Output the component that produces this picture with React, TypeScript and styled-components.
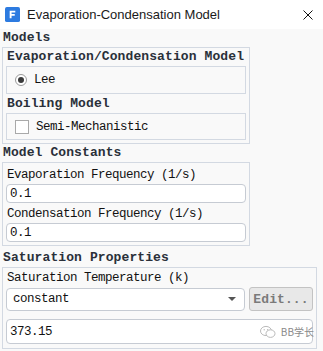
import React from "react";
import styled, { createGlobalStyle } from "styled-components";

let Global = createGlobalStyle`
  html, body { margin: 0; padding: 0; background: #f9f9f9; }
  * { box-sizing: border-box; }
`;

export default function App() {
  return (
    <Window>
      <Global />
      <TitleBar>
        <Logo viewBox="0 0 16 16">
          <rect x="0" y="0" width="16" height="16" rx="2" fill="#2d7be0" />
          <path d="M5 4h6v1.8H7v1.7h3.4v1.8H7V12H5z" fill="#fff" />
        </Logo>
        <Title>Evaporation-Condensation Model</Title>
        <Close viewBox="0 0 10 10">
          <path d="M0.5 0.5L9.5 9.5M9.5 0.5L0.5 9.5" stroke="#111" strokeWidth="1" />
        </Close>
      </TitleBar>
      <Body>
        <Heading h={18}>Models</Heading>
        <Group width={248}>
          <SubHeading h={18}>Evaporation/Condensation Model</SubHeading>
          <Inner h={28}>
            <Radio checked />
            <OptionText>Lee</OptionText>
          </Inner>
          <SubHeading h={19}>Boiling Model</SubHeading>
          <Inner h={27}>
            <Check />
            <OptionText>Semi-Mechanistic</OptionText>
          </Inner>
        </Group>

        <Heading h={18}>Model Constants</Heading>
        <Group width={248}>
          <Label h={21}>Evaporation Frequency (1/s)</Label>
          <Field>0.1</Field>
          <Label h={20}>Condensation Frequency (1/s)</Label>
          <Field>0.1</Field>
        </Group>

        <Heading h={21}>Saturation Properties</Heading>
        <Group width={315} last>
          <Label h={19}>Saturation Temperature (k)</Label>
          <SelectRow>
            <Select>
              <span>constant</span>
              <Caret />
            </Select>
            <EditButton>Edit...</EditButton>
          </SelectRow>
          <Field tall>373.15</Field>
        </Group>
      </Body>
      <Watermark>
        <svg width="16" height="14" viewBox="0 0 16 14">
          <ellipse cx="6" cy="6" rx="5.5" ry="4.6" fill="none" stroke="#bbb" strokeWidth="1" />
          <ellipse cx="10.5" cy="8.6" rx="4.5" ry="3.8" fill="#fff" stroke="#bbb" strokeWidth="1" />
          <circle cx="4.2" cy="4.8" r="0.7" fill="#bbb" />
          <circle cx="7.6" cy="4.8" r="0.7" fill="#bbb" />
        </svg>
        <span>BB学长</span>
      </Watermark>
    </Window>
  );
}

let Window = styled.div`
  position: relative;
  width: 323px;
  height: 351px;
  background: #f9f9f9;
  overflow: hidden;
`;

let TitleBar = styled.div`
  height: 29px;
  background: #ffffff;
  display: flex;
  align-items: center;
  padding: 0 10px 0 5px;
`;

let Logo = styled.svg`
  width: 15px;
  height: 15px;
  margin-right: 7px;
`;

let Title = styled.div`
  flex: 1;
  font-family: "Liberation Sans", Arial, sans-serif;
  font-size: 13px;
  color: #1a1a1a;
`;

let Close = styled.svg`
  width: 10px;
  height: 10px;
  margin-top: 1px;
`;

let Body = styled.div`
  padding: 0 0 0 2px;
  font-family: "Liberation Mono", "Noto Sans CJK SC", monospace;
  color: #111;
`;

let Heading = styled.div<{ h: number }>`
  height: ${({ h }) => h}px;
  display: flex;
  align-items: flex-end;
  padding-bottom: 2px;
  margin-left: 1px;
  font-size: 13px;
  font-weight: bold;
  letter-spacing: 0.1px;
  color: #2a3039;
`;

let Group = styled.div<{ width: number; last?: boolean }>`
  width: ${({ width }) => width}px;
  border: 1px solid #d3d9e2;
  padding: 0 3px ${({ last }) => (last ? 4 : 3)}px 3px;
  display: flex;
  flex-direction: column;
`;

let SubHeading = styled.div<{ h: number }>`
  height: ${({ h }) => h}px;
  display: flex;
  align-items: flex-end;
  padding-bottom: 2px;
  margin-left: 1px;
  font-size: 13px;
  font-weight: bold;
  letter-spacing: 0.1px;
  color: #2a3039;
`;

let Inner = styled.div<{ h: number }>`
  height: ${({ h }) => h}px;
  border: 1px solid #d3d9e2;
  display: flex;
  align-items: center;
  padding-left: 8px;
`;

let Radio = styled.span<{ checked?: boolean }>`
  width: 12px;
  height: 12px;
  border-radius: 50%;
  border: 1px solid #9a9a9a;
  background: #fff;
  display: flex;
  align-items: center;
  justify-content: center;
  &::after {
    content: "";
    width: 6px;
    height: 6px;
    border-radius: 50%;
    background: ${({ checked }) => (checked ? "#3a3a3a" : "transparent")};
  }
`;

let Check = styled.span`
  width: 14px;
  height: 14px;
  border: 1px solid #a9a9a9;
  background: #fff;
`;

let OptionText = styled.span`
  margin-left: 7px;
  font-size: 12.5px;
  letter-spacing: -0.5px;
`;

let Label = styled.div<{ h: number }>`
  height: ${({ h }) => h}px;
  display: flex;
  align-items: flex-end;
  padding-bottom: 2px;
  margin-left: 1px;
  font-size: 12.5px;
  letter-spacing: -0.5px;
`;

let Field = styled.div<{ tall?: boolean }>`
  height: ${({ tall }) => (tall ? 25 : 19)}px;
  margin-top: ${({ tall }) => (tall ? 8 : 0)}px;
  border: 1px solid #c6cbd3;
  border-radius: 4px;
  background: #fff;
  display: flex;
  align-items: center;
  padding-left: 3px;
  font-size: 12.5px;
  letter-spacing: -0.5px;
`;

let SelectRow = styled.div`
  display: flex;
  align-items: center;
  gap: 4px;
`;

let Select = styled.div`
  width: 239px;
  height: 23px;
  border: 1px solid #c6cbd3;
  border-radius: 4px;
  background: #fff;
  display: flex;
  align-items: center;
  justify-content: space-between;
  padding: 0 8px 0 6px;
  font-size: 12.5px;
  letter-spacing: -0.5px;
`;

let Caret = styled.span`
  width: 0;
  height: 0;
  border-left: 4px solid transparent;
  border-right: 4px solid transparent;
  border-top: 4px solid #555;
`;

let EditButton = styled.div`
  width: 64px;
  height: 24px;
  border: 1px solid #c3c3c3;
  border-radius: 3px;
  background: #e8e8e8;
  display: flex;
  align-items: center;
  justify-content: center;
  font-size: 13px;
  font-weight: bold;
  letter-spacing: 0.1px;
  color: #7a7a7a;
`;

let Watermark = styled.div`
  position: absolute;
  right: 9px;
  bottom: 12px;
  display: flex;
  align-items: center;
  gap: 5px;
  font-family: "Noto Sans CJK SC", sans-serif;
  font-size: 10px;
  color: #8a8a8a;
`;
